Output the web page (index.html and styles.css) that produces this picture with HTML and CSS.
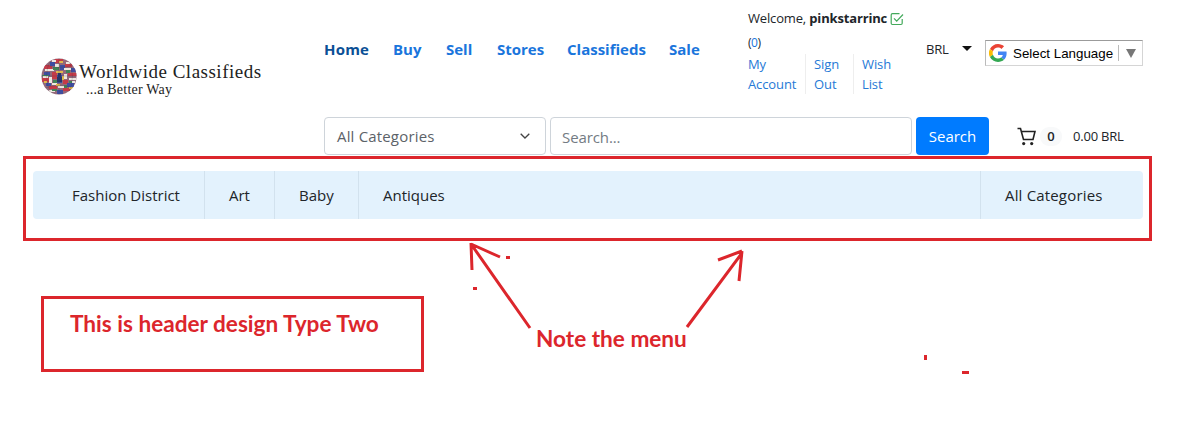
FILE: index.html
```html
<!DOCTYPE html>
<html lang="en">
<head>
<meta charset="utf-8">
<title>Worldwide Classifieds</title>
<link rel="stylesheet" href="styles.css">
</head>
<body>
<header class="header">
  <a class="logo">
    <svg class="globe" viewBox="0 0 36 37">
      <defs><clipPath id="ball"><ellipse cx="18" cy="18.5" rx="17.5" ry="18"/></clipPath></defs>
      <g clip-path="url(#ball)">
        <rect width="36" height="37" fill="#92687a"/>
        <path fill="#c43b48" d="M3 7h8v4H3zM14 1h8v4h-8zM24 6h7v3h-7zM27 15h9v3h-9zM1 20h7v4H1zM8 28h8v3H8zM22 30h7v3h-7zM11 14h5v7h-5zM22 22h5v4h-5z"/>
        <path fill="#3f4ea0" d="M9 4h5v4H9zM19 7h5v5h-5zM30 10h5v4h-5zM3 14h6v4H3zM16 17h5v8h-5zM26 25h7v4h-7zM5 25h5v3H5zM16 32h6v4h-6z"/>
        <path fill="#eee8e0" d="M4 11h9v2H4zM14 6h4v3h-4zM23 10h7v2h-7zM8 19h3v6H8zM23 16h3v5h-3zM28 20h7v2h-7zM11 25h5v2h-5zM17 28h6v2h-6zM8 32h6v2H8zM11 2h4v2h-4zM25 4h4v2h-4zM2 18h5v2H2zM29 23h5v2h-5z"/>
        <path fill="#428457" d="M12 9h6v3h-6zM25 12h4v3h-4zM1 17h7v1H1zM12 22h4v3h-4zM28 23h3v2h-3zM23 27h3v3h-3zM11 31h5v2h-5z"/>
        <path fill="#dfb84b" d="M18 3h4v2h-4zM15 13h7v2h-7zM21 18h2v4h-2zM3 23h3v2H3zM15 26h4v2h-4zM28 29h4v2h-4z"/>
        <path stroke="#302b43" stroke-opacity=".3" stroke-width=".6" fill="none" d="M18 0v37M0 18h36M4 7q14 5 28 0M4 30q14-5 28 0M10 1Q1 18 10 36M27 1q9 17 0 35"/>
        <path fill="#283668" d="M17 15h3v4h1v5h-5v-5h1z"/>
      </g>
    </svg>
    <span class="brand"><span class="brand-name">Worldwide Classifieds</span><span class="tagline">...a Better Way</span></span>
  </a>
  <div class="main">
    <div class="top">
      <nav class="nav">
        <a class="home">Home</a><a class="buy">Buy</a><a class="sell">Sell</a><a class="stores">Stores</a><a class="classifieds">Classifieds</a><a class="sale">Sale</a>
      </nav>
      <div class="account">
        <div class="welcome">Welcome, <b>pinkstarrinc</b>
          <svg class="check" viewBox="0 0 14 14"><path d="M12.2 7v4.3q0 1.2-1.2 1.2H2.4q-1.2 0-1.2-1.2V2.9q0-1.2 1.2-1.2h7.1M4 6.3l2.7 2.8L13 2.5"/></svg>
        </div>
        <div class="count">(<span>0</span>)</div>
        <div class="links"><a class="my">My<br>Account</a><a class="out">Sign<br>Out</a><a class="wish">Wish<br>List</a></div>
      </div>
      <div class="currency">BRL<i class="caret"></i></div>
      <div class="language">
        <svg class="google" viewBox="0 0 48 48"><path fill="#EA4335" d="M24 9.5c3.5 0 6.7 1.2 9.2 3.6l6.9-6.9C35.9 2.4 30.5 0 24 0 14.6 0 6.5 5.4 2.6 13.2l8 6.2C12.4 13.7 17.7 9.5 24 9.5z"/><path fill="#4285F4" d="M47 24.6c0-1.6-.2-3.1-.4-4.6H24v9h12.9c-.6 3-2.2 5.5-4.7 7.2l7.7 6C44.400 38 47 32 47 24.600z"/><path fill="#FBBC05" d="M10.500 28.600A14.500 14.500 0 0 1 10.500 19.400l-8-6.200a24 24 0 0 0 0 21.600z"/><path fill="#34A853" d="M24 48c6.500 0 11.900-2.100 15.900-5.800l-7.700-6c-2.200 1.500-4.900 2.300-8.200 2.300-6.300 0-11.600-4.200-13.500-9.900l-8 6.200C6.500 42.600 14.600 48 24 48z"/></svg>
        <span class="language-text">Select Language</span><i class="language-arrow"></i>
      </div>
    </div>
    <div class="search-row">
      <div class="select"><span>All Categories</span><svg class="chevron" viewBox="0 0 10 6"><path d="M.7.7 5 5 9.300.7"/></svg></div>
      <div class="field"><span>Search...</span></div>
      <div class="button"><span>Search</span></div>
      <div class="cart">
        <svg class="cart-icon" viewBox="0 0 19 19"><path d="M.5 1.500h3l3 11h9.500l2-8H4.500"/><circle cx="6.700" cy="16.600" r="1.600"/><circle cx="14.700" cy="16.600" r="1.600"/></svg>
        <span class="badge">0</span><span class="total">0.00 BRL</span>
      </div>
    </div>
  </div>
</header>
<section class="frame">
  <nav class="menu">
    <a class="fashion"><span>Fashion District</span></a><a class="art"><span>Art</span></a><a class="baby"><span>Baby</span></a><a class="antiques"><span>Antiques</span></a><a class="all"><span>All Categories</span></a>
  </nav>
</section>
<section class="notes">
  <div class="type-note"><span>This is header design Type Two</span></div>
  <div class="menu-note"><span>Note the menu</span></div>
</section>
<svg class="marks" viewBox="0 0 1192 448">
  <path d="M530 328 471 244M471 243l1 27M471 244l29 13M687 327l55-74M742 251l-24 9M742 251l-3 30"/>
  <path class="dots" d="M506 256h4v3h-4zM473 287h4v3h-4zM924 355h3v5h-3zM962 371h7v3h-7z"/>
</svg>
</body>
</html>
```
FILE: styles.css
```css
* { box-sizing: border-box; }
body { margin: 0; width: 1192px; height: 448px; overflow: hidden; background: #fff; color: #212529; font-family: "Open Sans", "Noto Sans", sans-serif; }
span, a { white-space: nowrap; }
.header { display: flex; height: 156px; }
.logo { display: flex; width: 324px; padding: 58px 0 0 41px; }
.globe { width: 36px; height: 37px; }
.brand { display: flex; flex-direction: column; padding: 4px 0 0 2px; font-family: "Liberation Serif", serif; color: #222; }
.brand-name { font-size: 19px; line-height: 20px; letter-spacing: .5px; }
.tagline { padding-left: 7px; font-size: 14px; line-height: 16px; letter-spacing: .22px; }
.main { width: 868px; }
.top { display: flex; height: 117px; }
.nav { display: flex; width: 424px; padding-top: 37px; font-size: 15px; line-height: 24px; font-weight: 700; color: #1a75dc; }
.home { width: 69px; color: #0b5096; letter-spacing: .2px; }
.buy { width: 53px; }
.sell { width: 51px; }
.stores { width: 70px; }
.classifieds { width: 102px; }
.account { width: 178px; padding-top: 8px; font-size: 13px; line-height: 20px; letter-spacing: -.1px; }
.welcome { display: flex; white-space: pre; letter-spacing: -.16px; }
.check { width: 14px; height: 14px; margin: 4px 0 0 3px; fill: none; stroke: #43a95b; stroke-width: 1.2; }
.count { margin-top: 5px; font-size: 12px; letter-spacing: -.5px; }
.count span { color: #1a75dc; }
.links { display: flex; margin-top: 1px; color: #2679d6; }
.my { width: 57px; }
.out { width: 48px; padding-left: 8px; border-left: 1px solid #eee; }
.wish { padding-left: 8px; border-left: 1px solid #eee; }
.currency { display: flex; justify-content: space-between; width: 59px; padding: 39px 13px 0 0; font-size: 13px; line-height: 20px; letter-spacing: -.2px; }
.caret { width: 0; height: 0; margin-top: 7px; border: 5px solid transparent; border-top-color: #111; border-bottom: 0; }
.language { display: flex; align-items: center; width: 158px; height: 26px; margin-top: 40px; padding-left: 3px; border: 1px solid #d5d5d5; border-top-color: #9b9b9b; border-left-color: #bbb; font: 13.333px "Liberation Sans", sans-serif; color: #000; }
.google { width: 18px; height: 18px; margin-right: 6px; }
.language-text { width: 105px; }
.language-arrow { display: flex; height: 16px; padding: 4px 0 0 7px; border-left: 1px solid #bbb; }
.language-arrow::after { content: ""; height: 9px; border: 5px solid transparent; border-top: 9px solid #777; border-bottom: 0; }
.search-row { display: flex; height: 38px; gap: 4px; font-size: 15px; line-height: 36px; }
.select, .field { border: 1px solid #ced4da; border-radius: 4px; padding-left: 12px; color: #5c6268; }
.select { display: flex; width: 222px; justify-content: space-between; align-items: center; padding-right: 15px; letter-spacing: .17px; }
.chevron { width: 10px; height: 6px; fill: none; stroke: #444; stroke-width: 1.3; }
.field { width: 362px; padding-left: 11px; padding-top: 1px; color: #737b83; letter-spacing: -.1px; }
.button { width: 73px; border-radius: 4px; background: #007bff; color: #fff; text-align: center; line-height: 38px; }
.cart { display: flex; padding: 10px 0 0 24px; font-size: 13px; line-height: 18px; }
.cart-icon { width: 19px; height: 19px; fill: none; stroke: #222; stroke-width: 1.6; }
.cart-icon circle { fill: #222; stroke: none; }
.badge { width: 22px; height: 19px; margin-left: 4px; border-radius: 9px; background: #f8f9fa; text-align: center; font-weight: 600; }
.total { margin-left: 11px; letter-spacing: -.2px; }
.frame { width: 1129px; height: 85px; margin-left: 23px; padding: 12px 6px 0 7px; border: 3px solid #dc262c; }
.menu { display: flex; height: 48px; border-radius: 4px; background: #e3f2fd; font-size: 15px; line-height: 49px; }
.menu a { padding-left: 24px; border-left: 1px solid #d2e2ee; }
.menu .fashion { width: 171px; padding-left: 39px; border-left: 0; }
.art { width: 70px; }
.baby { width: 84px; }
.menu .all { width: 163px; margin-left: auto; letter-spacing: .17px; }
.notes { display: flex; padding: 55px 0 0 41px; font-family: Lato, sans-serif; font-size: 22.6px; font-weight: 700; color: #dc262c; }
.type-note { width: 383px; height: 76px; padding: 11px 0 0 26px; border: 3px solid #dc262c; line-height: 28px; }
.menu-note { padding: 29px 0 0 112px; line-height: 28px; }
.marks { position: absolute; left: 0; top: 0; width: 1192px; height: 448px; pointer-events: none; fill: none; stroke: #dc262c; stroke-width: 3; }
.dots { fill: #dc262c; stroke: none; }
```
